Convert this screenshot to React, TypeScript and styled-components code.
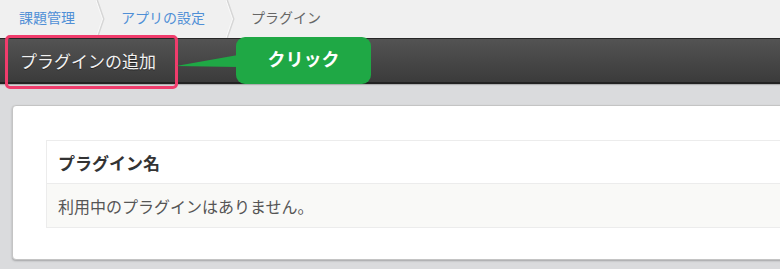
import React from 'react'
import styled, { createGlobalStyle } from 'styled-components'

const GlobalStyle = createGlobalStyle`
    html, body {
        margin: 0;
        padding: 0;
        background: #dadbdd;
        overflow: hidden;
        font-family: "Noto Sans CJK JP", "Noto Sans", sans-serif;
    }
`

const crumbs = [
    { label: '課題管理', link: true },
    { label: 'アプリの設定', link: true },
    { label: 'プラグイン', link: false },
]

const App: React.FC = () => {
    return (
        <Page>
            <GlobalStyle />
            <Breadcrumb>
                {crumbs.map((c, i) => (
                    <Crumb key={c.label} $link={c.link}>
                        <span>{c.label}</span>
                        {i < crumbs.length - 1 && (
                            <Chevron width="9" height="38" viewBox="0 0 9 38">
                                <path d="M1 0 L7.5 19 L1 38" fill="none" stroke="#d6d6d6" strokeWidth="2" />
                                <path d="M0 0 L6.5 19 L0 38" fill="none" stroke="#fafafa" strokeWidth="1" />
                            </Chevron>
                        )}
                    </Crumb>
                ))}
            </Breadcrumb>

            <Toolbar>
                <ToolbarTitle>プラグインの追加</ToolbarTitle>
                <Highlight />
                <Tail width="62" height="15" viewBox="0 0 62 15">
                    <polygon points="0,12 62,1 62,13" fill="#1fa845" />
                </Tail>
                <Callout>クリック</Callout>
            </Toolbar>

            <Main>
                <Card>
                    <PluginTable>
                        <HeadRow>プラグイン名</HeadRow>
                        <BodyRow>利用中のプラグインはありません。</BodyRow>
                    </PluginTable>
                </Card>
            </Main>
        </Page>
    )
}

export default App

const Page = styled.div`
    width: 780px;
    height: 269px;
    overflow: hidden;
    background: #dadbdd;
`

const Breadcrumb = styled.nav`
    height: 38px;
    display: flex;
    align-items: center;
    padding-left: 3px;
    background: #f0f0f0;
`

const Crumb = styled.div<{ $link: boolean }>`
    display: flex;
    align-items: center;
    height: 38px;
    padding-left: 16px;
    font-size: 14px;
    color: ${p => (p.$link ? '#4f8fd6' : '#666666')};
    span {
        margin-right: 21px;
        margin-top: -5px;
    }
`

const Chevron = styled.svg`
    display: block;
    flex-shrink: 0;
`

const Toolbar = styled.div`
    position: relative;
    height: 43px;
    display: flex;
    align-items: center;
    background: linear-gradient(#535353, #3b3b3b);
    border-top: 1px solid #262626;
    border-bottom: 2px solid #222222;
    box-shadow: 0 1px 1px rgba(0, 0, 0, 0.2);
`

const ToolbarTitle = styled.h1`
    margin: 0 0 0 20px;
    font-size: 17px;
    font-weight: normal;
    color: #f2f2f2;
    text-shadow: 0 1px 0 rgba(0, 0, 0, 0.5);
`

const Highlight = styled.div`
    position: absolute;
    left: 5px;
    top: -4px;
    width: 167px;
    height: 48px;
    border: 3px solid #f03c6c;
    border-radius: 5px;
    pointer-events: none;
`

const Tail = styled.svg`
    position: absolute;
    left: 176px;
    top: 15px;
`

const Callout = styled.div`
    position: absolute;
    left: 236px;
    top: -2px;
    width: 135px;
    height: 47px;
    display: flex;
    align-items: center;
    justify-content: center;
    padding-bottom: 6px;
    box-sizing: border-box;
    background: #1fa845;
    border-radius: 9px;
    color: #ffffff;
    font-size: 18px;
    font-weight: bold;
`

const Main = styled.main`
    padding: 21px 0 0 12px;
`

const Card = styled.section`
    height: 155px;
    box-sizing: border-box;
    margin-right: -10px;
    padding: 34px 0 0 33px;
    background: #ffffff;
    border: 1px solid #c4c4c4;
    border-radius: 4px;
    box-shadow: 0 1px 2px rgba(0, 0, 0, 0.25);
`

const PluginTable = styled.div`
    margin-right: -10px;
    border: 1px solid #ececec;
`

const HeadRow = styled.div`
    height: 42px;
    display: flex;
    align-items: center;
    padding-left: 11px;
    font-size: 17px;
    font-weight: bold;
    color: #333333;
    background: #ffffff;
    border-bottom: 1px solid #ececec;
`

const BodyRow = styled.div`
    height: 43px;
    display: flex;
    align-items: center;
    padding-left: 11px;
    font-size: 16px;
    color: #555555;
    background: #f9f9f7;
`
